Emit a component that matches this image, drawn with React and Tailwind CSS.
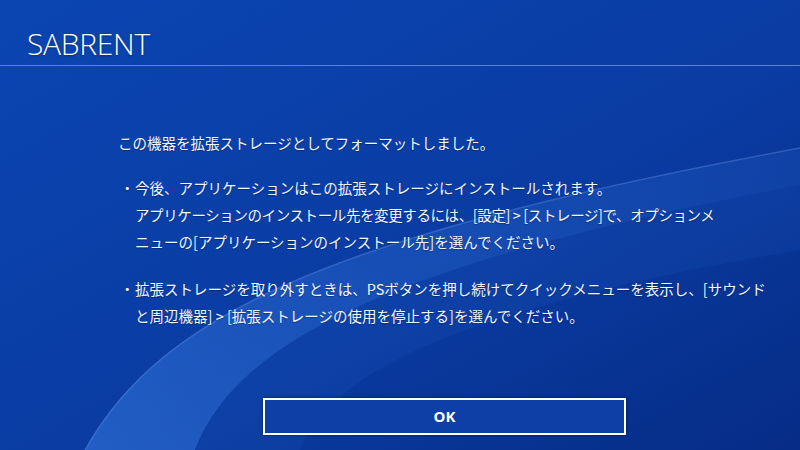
import React from "react";

function Waves() {
  return (
    <svg
      className="absolute inset-0 pointer-events-none"
      width="800"
      height="450"
      viewBox="0 0 800 450"
    >
      <defs>
        <linearGradient id="bg" x1="0" y1="0" x2="1" y2="1">
          <stop offset="0" stopColor="#0b45b2" />
          <stop offset="0.55" stopColor="#0a3ca3" />
          <stop offset="1" stopColor="#062c86" />
        </linearGradient>
        <linearGradient id="band" x1="0" y1="1" x2="1" y2="0">
          <stop offset="0" stopColor="#3f86ee" stopOpacity="0.45" />
          <stop offset="0.5" stopColor="#3f86ee" stopOpacity="0.25" />
          <stop offset="1" stopColor="#3f86ee" stopOpacity="0.12" />
        </linearGradient>
      </defs>
      <rect width="800" height="450" fill="url(#bg)" />
      <path
        d="M85 450 C160 315 330 235 800 148 L800 185 C380 265 235 345 195 450 Z"
        fill="url(#band)"
      />
      <path
        d="M195 450 C235 345 380 265 800 185 L800 250 C450 310 330 375 300 450 Z"
        fill="#3f86ee"
        opacity="0.08"
      />
      <path
        d="M85 450 C160 315 330 235 800 148"
        fill="none"
        stroke="#8fb8ff"
        strokeOpacity="0.25"
        strokeWidth="1.5"
      />
    </svg>
  );
}

export default function App() {
  const jp = { fontFamily: '"Noto Sans CJK JP", "Noto Sans", sans-serif' };
  return (
    <div className="relative w-[800px] h-[450px] overflow-hidden bg-[#0a3ca3] text-white">
      <Waves />
      <div className="relative flex flex-col h-full">
        {/* Header */}
        <div className="h-[66px] flex items-center pl-[27px] pt-[22px] border-b border-[#5a84d4]">
          <h1
            className="text-[30px] font-light tracking-[-0.3px] text-white [text-shadow:0_1px_2px_rgba(0,0,0,0.35)]"
            style={{ fontFamily: '"Open Sans", "Liberation Sans", sans-serif' }}
          >
            SABRENT
          </h1>
        </div>

        {/* Body */}
        <div
          className="ml-[118px] w-[653px] pt-[63px] text-[14.5px] leading-[27px] text-[#f4f7ff] whitespace-nowrap [text-shadow:0_1px_1px_rgba(0,0,0,0.3)]"
          style={jp}
        >
          <p>この機器を拡張ストレージとしてフォーマットしました。</p>

          <div className="flex mt-[18px]">
            <span className="w-[17px] shrink-0 pl-[2px]">・</span>
            <p>
              今後、アプリケーションはこの拡張ストレージにインストールされます。
              <br />
              <span className="tracking-[-0.4px]">
                アプリケーションのインストール先を変更するには、[設定] &gt; [ストレージ]で、オプションメ
              </span>
              <br />
              ニューの[アプリケーションのインストール先]を選んでください。
            </p>
          </div>

          <div className="flex mt-[20px]">
            <span className="w-[17px] shrink-0 pl-[2px]">・</span>
            <p>
              拡張ストレージを取り外すときは、PSボタンを押し続けてクイックメニューを表示し、[サウンド
              <br />
              と周辺機器] &gt; [拡張ストレージの使用を停止する]を選んでください。
            </p>
          </div>

          <div className="flex justify-center mt-[69px]">
            <button className="w-[363px] h-[37px] border-2 border-white bg-[#0d3fa6] shadow-[0_0_3px_rgba(0,0,0,0.5)] flex items-center justify-center">
              <span
                className="text-[15px] font-bold text-white"
                style={{ fontFamily: '"Open Sans", "Liberation Sans", sans-serif' }}
              >
                OK
              </span>
            </button>
          </div>
        </div>
      </div>
    </div>
  );
}
